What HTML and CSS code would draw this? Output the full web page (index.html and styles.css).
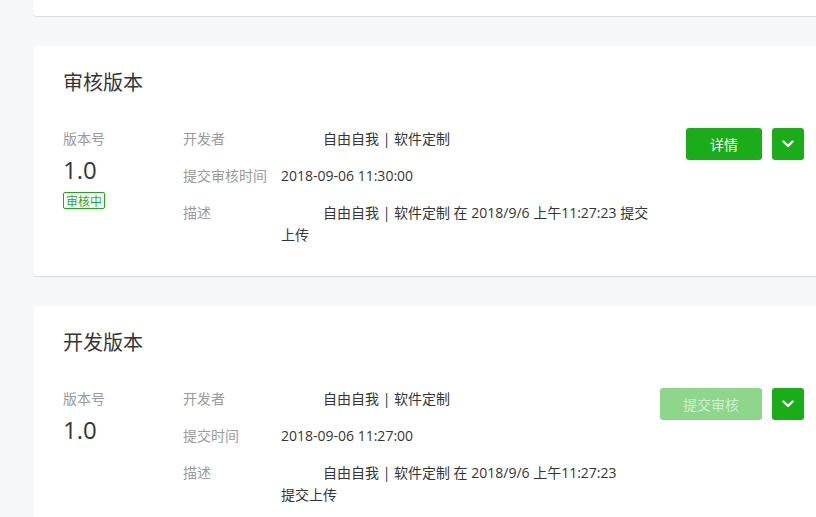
FILE: index.html
```html
<!DOCTYPE html>
<html lang="zh-CN">
<head>
<meta charset="utf-8">
<link rel="stylesheet" href="styles.css">
</head>
<body>
<div class="page">
  <div class="card card-cut"></div>

  <div class="card">
    <h2 class="card-title">审核版本</h2>
    <div class="card-body">
      <div class="ver">
        <div class="label">版本号</div>
        <div class="ver-num">1.0</div>
        <span class="tag">审核中</span>
      </div>
      <div class="info">
        <div class="row"><span class="label lab-wide">开发者</span><span class="value">自由自我 | 软件定制</span></div>
        <div class="row"><span class="label lab-narrow">提交审核时间</span><span class="value">2018-09-06 11:30:00</span></div>
        <div class="row"><span class="label lab-wide">描述</span><span class="value">自由自我 | 软件定制 在 2018/9/6 上午11:27:23 提交上传</span></div>
      </div>
      <div class="actions">
        <button class="btn btn-main">详情</button>
        <button class="btn btn-drop"><svg width="12" height="8" viewBox="0 0 12 8"><path d="M1.5 1.5 L6 6 L10.5 1.5" fill="none" stroke="#fff" stroke-width="2.4" stroke-linecap="round" stroke-linejoin="round"/></svg></button>
      </div>
    </div>
  </div>

  <div class="card">
    <h2 class="card-title">开发版本</h2>
    <div class="card-body">
      <div class="ver">
        <div class="label">版本号</div>
        <div class="ver-num">1.0</div>
      </div>
      <div class="info">
        <div class="row"><span class="label lab-wide">开发者</span><span class="value">自由自我 | 软件定制</span></div>
        <div class="row"><span class="label lab-narrow">提交时间</span><span class="value">2018-09-06 11:27:00</span></div>
        <div class="row"><span class="label lab-wide">描述</span><span class="value">自由自我 | 软件定制 在 2018/9/6 上午11:27:23 提交上传</span></div>
      </div>
      <div class="actions">
        <button class="btn btn-main btn-disabled">提交审核</button>
        <button class="btn btn-drop"><svg width="12" height="8" viewBox="0 0 12 8"><path d="M1.5 1.5 L6 6 L10.5 1.5" fill="none" stroke="#fff" stroke-width="2.4" stroke-linecap="round" stroke-linejoin="round"/></svg></button>
      </div>
    </div>
  </div>
</div>
</body>
</html>
```

FILE: styles.css
```css
* { box-sizing: border-box; }
html, body {
  margin: 0;
  padding: 0;
  background: #f6f7f9;
  overflow: hidden;
  font-family: "Open Sans", "Noto Sans CJK SC", sans-serif;
  color: #353535;
}
.page {
  padding-left: 33px;
  width: 834px;
  display: flex;
  flex-direction: column;
  gap: 30px;
}
.card {
  background: #fff;
  border-radius: 4px;
  box-shadow: 0 1px 1px rgba(0, 0, 0, 0.12);
  padding: 23px 30px 30px 30px;
}
.card-cut {
  height: 16px;
  padding: 0;
  border-radius: 0 0 4px 4px;
}
.card-title {
  margin: 0;
  font-size: 20px;
  line-height: 28px;
  font-weight: normal;
  color: #353535;
}
.card-body {
  display: flex;
  margin-top: 31px;
}
.ver {
  width: 120px;
  flex: none;
}
.label {
  font-size: 14px;
  line-height: 22px;
  color: #9a9a9a;
}
.ver-num {
  font-size: 24px;
  line-height: 32px;
  margin-top: 4px;
  color: #353535;
}
.tag {
  display: inline-block;
  margin-top: 6px;
  font-size: 12px;
  line-height: 15px;
  padding: 0 2px;
  color: #1aad19;
  border: 1px solid #1aad19;
  border-radius: 2px;
  font-family: "Noto Sans CJK SC", sans-serif;
}
.info {
  flex: 1;
  margin-right: 30px;
}
.row {
  font-size: 14px;
  line-height: 22px;
  padding-left: 98px;
}
.row + .row { margin-top: 15px; }
.row .label {
  display: inline-block;
  margin-left: -98px;
}
.lab-wide { width: 140px; }
.lab-narrow { width: 98px; }
.value { color: #353535; }
.actions {
  flex: none;
  display: flex;
  gap: 10px;
  align-items: flex-start;
}
.btn {
  border: 0;
  height: 32px;
  border-radius: 3px;
  background: #1aad19;
  color: #fff;
  font-family: "Noto Sans CJK SC", sans-serif;
  font-size: 14px;
  padding: 0;
  display: flex;
  align-items: center;
  justify-content: center;
}
.btn-main { width: 76px; }
.btn-disabled {
  width: 102px;
  background: #8dd68c;
  color: rgba(255, 255, 255, 0.6);
}
.btn-drop { width: 32px; }
```
